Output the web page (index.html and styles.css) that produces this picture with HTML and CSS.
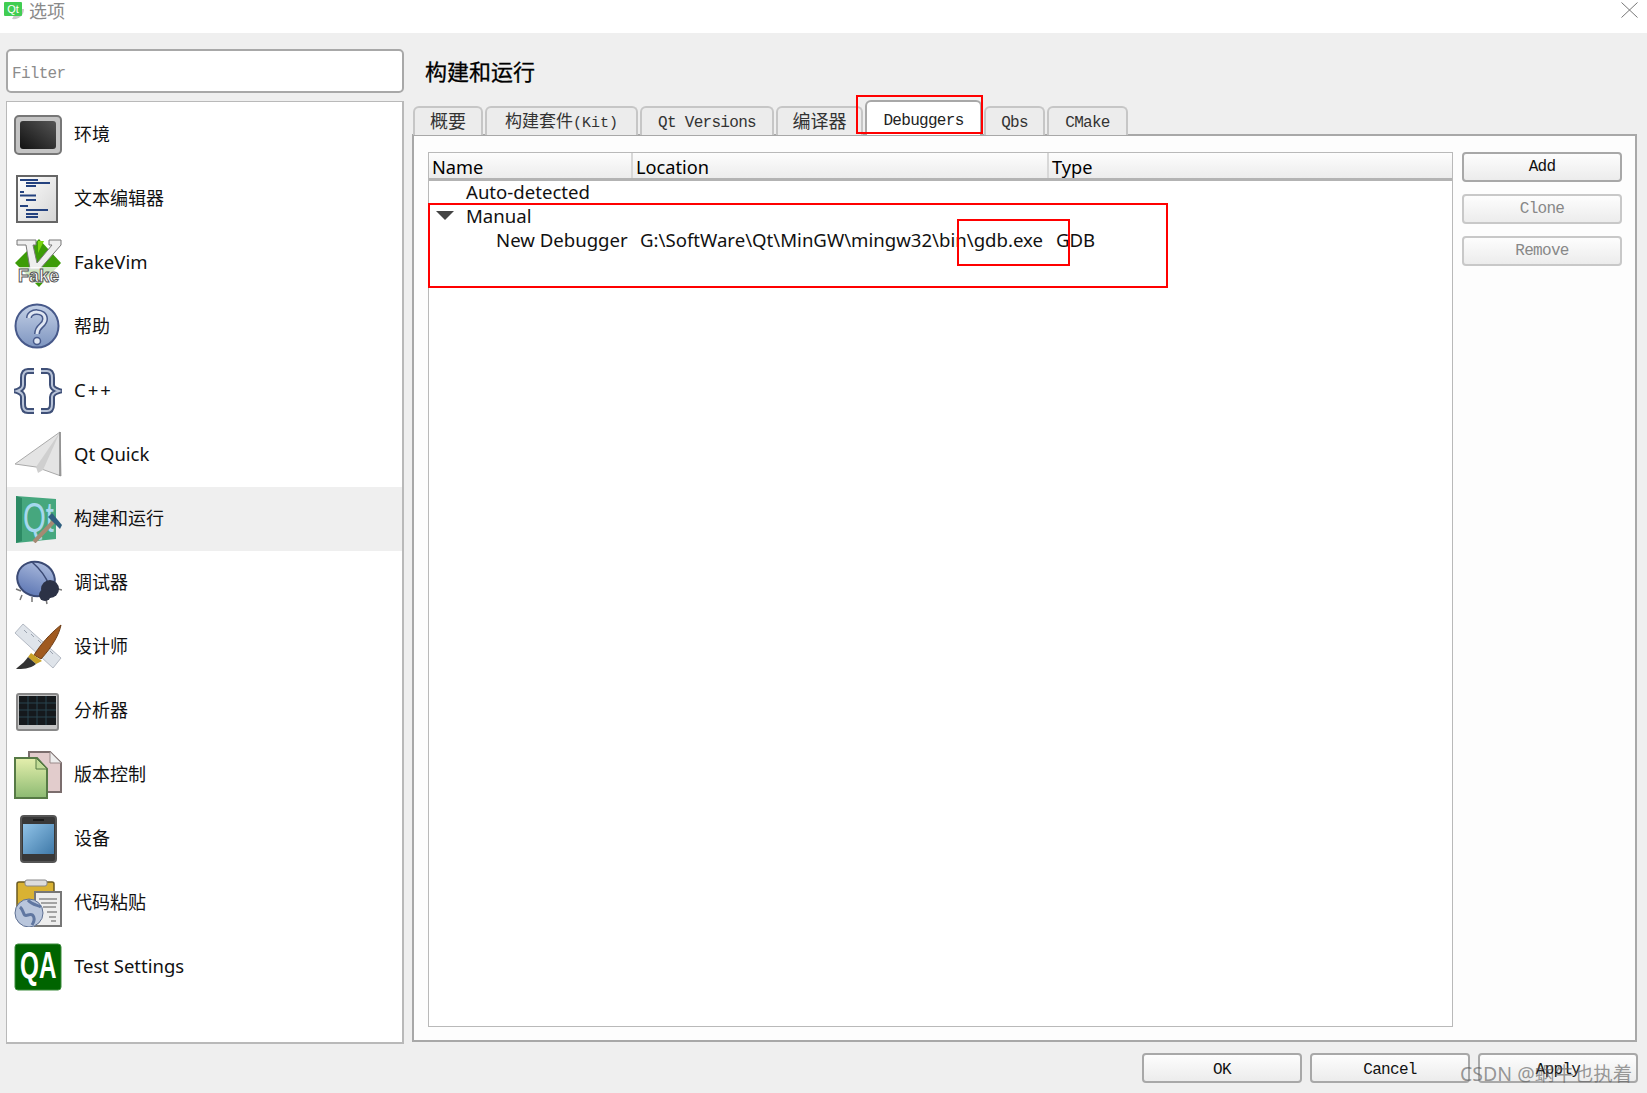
FILE: index.html
```html
<!DOCTYPE html>
<html lang="zh-CN">
<head>
    <meta charset="UTF-8">
    <title>选项</title>
    <link rel="stylesheet" href="styles.css">
</head>
<body>
    <div class="win">
        <!-- title bar -->
        <header class="titlebar">
            <svg class="app-logo" width="24" height="22" viewBox="0 0 24 22">
                <path d="M12 20C16 12 20 10 24 10C24 16 19 21 12 20Z" fill="#c9c9c9"/>
                <rect x="4" y="3" width="18" height="14" rx="1" fill="#41cd52"/>
                <text x="13" y="14" font-family="Liberation Sans" font-size="11" fill="#fff" text-anchor="middle">Qt</text>
            </svg>
            <span class="win-title">选项</span>
            <svg class="win-close" width="17" height="16" viewBox="0 0 17 16">
                <path d="M0.5 0.5L16.500 15.500M16.500 0.5L0.5 15.500" stroke="#777" stroke-width="1" fill="none"/>
            </svg>
        </header>

        <div class="main">
            <!-- left column -->
            <aside class="side">
                <div class="filter">Filter</div>
                <ul class="cat-list">
                    <li class="cat">
                        <svg class="cat-icon" viewBox="0 0 48 48">
                            <defs><linearGradient id="envg" x1="0" y1="1" x2="1" y2="0"><stop offset="0" stop-color="#111"/><stop offset="1" stop-color="#555"/></linearGradient></defs>
                            <rect x="1" y="5" width="46" height="38" rx="4" fill="#c4c4c4" stroke="#777" stroke-width="2"/>
                            <rect x="6" y="10" width="36" height="28" rx="3" fill="url(#envg)"/>
                        </svg>
                        <span>环境</span>
                    </li>
                    <li class="cat">
                        <svg class="cat-icon" viewBox="0 0 48 48">
                            <defs><linearGradient id="txtg" x1="0" y1="0" x2="1" y2="1"><stop offset="0" stop-color="#fff"/><stop offset="1" stop-color="#d4d4d4"/></linearGradient></defs>
                            <rect x="3" y="1" width="40" height="46" fill="url(#txtg)" stroke="#666" stroke-width="2"/>
                            <path d="M6 5h18M12 8h24M12 11h10M6 17h4M6 20.500h16M12 25h10M6 31h8M12 35h22M12 39h12M12 42h12" stroke="#24427f" stroke-width="2" fill="none"/>
                        </svg>
                        <span>文本编辑器</span>
                    </li>
                    <li class="cat">
                        <svg class="cat-icon" viewBox="0 0 48 48">
                            <path d="M25 0L47 24L25 48L1 24Z" fill="#3c9c08"/>
                            <path d="M3 1H22V6H19L23 24L38 6H35V1H47V6L26 30H16L12 6H3Z" fill="#eee" stroke="#777"/>
                            <path d="M24 2L30 2L24 14Z" fill="#7ad50e"/>
                            <rect x="3" y="28" width="43" height="16" fill="#fff" fill-opacity="0.75"/>
                            <text x="4" y="43" class="ic-fake" textLength="41" lengthAdjust="spacingAndGlyphs">Fake</text>
                        </svg>
                        <span class="cat-en">FakeVim</span>
                    </li>
                    <li class="cat">
                        <svg class="cat-icon" viewBox="0 0 48 48">
                            <defs><linearGradient id="helpg" x1="0" y1="0" x2="0" y2="1"><stop offset="0" stop-color="#c3d0e6"/><stop offset="1" stop-color="#7e95c0"/></linearGradient></defs>
                            <circle cx="23" cy="23" r="21.500" fill="url(#helpg)" stroke="#47598a" stroke-width="2"/>
                            <path d="M15 15C15 7 31 7 31 16C31 23 23 22 23 31" fill="none" stroke="#47598a" stroke-width="6"/>
                            <path d="M15 15C15 7 31 7 31 16C31 23 23 22 23 31" fill="none" stroke="#dfe6f2" stroke-width="3"/>
                            <circle cx="23" cy="38" r="3.500" fill="#dfe6f2" stroke="#47598a" stroke-width="1.500"/>
                        </svg>
                        <span>帮助</span>
                    </li>
                    <li class="cat">
                        <svg class="cat-icon" viewBox="0 0 48 48">
                            <path d="M20 4H14C10 4 9 7 9 11V18C9 21 6 23 3 24C6 25 9 27 9 30V37C9 41 10 44 14 44H20M27 4H33C37 4 38 7 38 11V18C38 21 42 23 45 24C42 25 38 27 38 30V37C38 41 37 44 33 44H27" fill="none" stroke="#3f5078" stroke-width="6"/>
                            <path d="M20 4H14C10 4 9 7 9 11V18C9 21 6 23 3 24C6 25 9 27 9 30V37C9 41 10 44 14 44H20M27 4H33C37 4 38 7 38 11V18C38 21 42 23 45 24C42 25 38 27 38 30V37C38 41 37 44 33 44H27" fill="none" stroke="#b9c4d8" stroke-width="2"/>
                        </svg>
                        <span class="cat-cpp">C++</span>
                    </li>
                    <li class="cat">
                        <svg class="cat-icon" viewBox="0 0 48 48">
                            <path d="M46 1L1 33L22 36L47 45Z" fill="#e4e4e4" stroke="#aaa"/>
                            <path d="M46 1L22 36L24 42L29 39Z" fill="#cfcfcf"/>
                            <path d="M46 1V45" stroke="#888" stroke-width="1.500"/>
                        </svg>
                        <span class="cat-en">Qt Quick</span>
                    </li>
                    <li class="cat cat-on">
                        <svg class="cat-icon" viewBox="0 0 48 48">
                            <path d="M2 1L42 4V44L2 48Z" fill="#46a77e"/>
                            <path d="M2 1L8 3V46L2 48Z" fill="#2c8a64"/>
                            <text transform="translate(9 37) scale(1.050 1.500)" class="ic-qt">Qt</text>
                            <path d="M20 47L42 24" stroke="#a58a73" stroke-width="4"/>
                            <path d="M34 22L46 34L48 30L38 18Z" fill="#2f5f7f"/>
                        </svg>
                        <span>构建和运行</span>
                    </li>
                    <li class="cat">
                        <svg class="cat-icon" viewBox="0 0 48 48">
                            <defs><linearGradient id="bugg" x1="0" y1="0" x2="0" y2="1"><stop offset="0" stop-color="#a9b9dc"/><stop offset="1" stop-color="#6079b5"/></linearGradient></defs>
                            <path d="M2 30L7 32M8 36L6 41M18 38L18 43M32 40L33 45M44 30L48 31" stroke="#777" stroke-width="1.500"/>
                            <ellipse cx="22" cy="20" rx="19" ry="17" transform="rotate(20 22 20)" fill="url(#bugg)" stroke="#3b4a74" stroke-width="2"/>
                            <path d="M18 3C26 10 32 18 35 26" fill="none" stroke="#3b4a74" stroke-width="1.500"/>
                            <circle cx="36" cy="30" r="9" fill="#2c3246"/>
                            <circle cx="31" cy="36" r="6" fill="#2c3246"/>
                        </svg>
                        <span>调试器</span>
                    </li>
                    <li class="cat">
                        <svg class="cat-icon" viewBox="0 0 48 48">
                            <path d="M9 1L47 35L39 45L1 10Z" fill="#dfe4ea" stroke="#b4bac4"/>
                            <path d="M10 7L13 10M17 11L20 14M24 17L27 20M36 28L39 31" stroke="#9aa2ae" fill="none"/>
                            <path d="M47 2C42 6 30 16 20 32L27 36C38 24 45 12 47 2Z" fill="#a05a20" stroke="#6f3f18"/>
                            <path d="M17 30L28 38L22 41L14 34Z" fill="#c9a227"/>
                            <path d="M14 34L22 41C16 46 8 46 2 46C6 42 10 40 14 34Z" fill="#333"/>
                        </svg>
                        <span>设计师</span>
                    </li>
                    <li class="cat">
                        <svg class="cat-icon" viewBox="0 0 48 48">
                            <rect x="3" y="7" width="41" height="36" rx="2" fill="#c4c4c4" stroke="#888" stroke-width="2"/>
                            <rect x="5" y="9" width="37" height="29" fill="#15191c"/>
                            <path d="M5 16H42M5 23H42M5 30H42M14 9V38M23 9V38M32 9V38" stroke="#28454f" stroke-width="1"/>
                        </svg>
                        <span>分析器</span>
                    </li>
                    <li class="cat">
                        <svg class="cat-icon" viewBox="0 0 48 48">
                            <defs><linearGradient id="vcg" x1="0" y1="0" x2="0" y2="1"><stop offset="0" stop-color="#e5efad"/><stop offset="1" stop-color="#8cba72"/></linearGradient></defs>
                            <path d="M15 1H36L47 12V41H15Z" fill="#e2cccc" stroke="#7b6d6d" stroke-width="2"/>
                            <path d="M36 1V12H47" fill="#eee" stroke="#9a8a8a"/>
                            <path d="M1 7H23L33 18V47H1Z" fill="url(#vcg)" stroke="#567a45" stroke-width="2"/>
                            <path d="M22 7V18H33Z" fill="#c2dc97" stroke="#567a45"/>
                        </svg>
                        <span>版本控制</span>
                    </li>
                    <li class="cat">
                        <svg class="cat-icon" viewBox="0 0 48 48">
                            <defs><linearGradient id="devg" x1="0" y1="0" x2="1" y2="1"><stop offset="0" stop-color="#90c3e8"/><stop offset="1" stop-color="#3f79a8"/></linearGradient></defs>
                            <rect x="7" y="1" width="35" height="46" rx="3" fill="#383838" stroke="#555" stroke-width="2"/>
                            <rect x="9" y="9" width="31" height="30" fill="url(#devg)"/>
                            <path d="M19 5H30" stroke="#111" stroke-width="1.500"/>
                        </svg>
                        <span>设备</span>
                    </li>
                    <li class="cat">
                        <svg class="cat-icon" viewBox="0 0 48 48">
                            <rect x="3" y="3" width="37" height="36" rx="2" fill="#d9b233" stroke="#6a5a22" stroke-width="1.500"/>
                            <rect x="11" y="1" width="22" height="6" rx="2" fill="#ddd" stroke="#888"/>
                            <rect x="21" y="13" width="26" height="34" fill="#eee" stroke="#777" stroke-width="2"/>
                            <path d="M25 20H43M27 24H43M29 28H42M33 33H43M35 38H42M37 42H42" stroke="#8a8a8a" stroke-width="1.500"/>
                            <circle cx="15" cy="34" r="14" fill="#b9c6dc" stroke="#5d6f92"/>
                            <path d="M6 28C11 32 8 38 14 36C20 34 22 40 18 46M14 21C18 26 24 26 27 28" stroke="#6077a1" stroke-width="3" fill="none"/>
                        </svg>
                        <span>代码粘贴</span>
                    </li>
                    <li class="cat">
                        <svg class="cat-icon" viewBox="0 0 48 48">
                            <rect x="1" y="1" width="46" height="46" rx="3" fill="#006400" stroke="#3d8c3d"/>
                            <text transform="translate(6 35) scale(0.900 1.400)" class="ic-qa">QA</text>
                        </svg>
                        <span class="cat-en">Test Settings</span>
                    </li>
                </ul>
            </aside>

            <!-- right column -->
            <section class="page">
                <h1 class="page-title">构建和运行</h1>
                <div class="tabs">
                    <div class="tab tab-a">概要</div>
                    <div class="tab tab-b">构建套件<span class="tab-kit">(Kit)</span></div>
                    <div class="tab tab-c">Qt Versions</div>
                    <div class="tab tab-d">编译器</div>
                    <div class="tab tab-e tab-on">Debuggers</div>
                    <div class="tab tab-f">Qbs</div>
                    <div class="tab tab-g">CMake</div>
                </div>
                <div class="tab-body">
                    <div class="tree">
                        <div class="tree-head">
                            <div class="th th-name">Name</div>
                            <div class="th th-loc">Location</div>
                            <div class="th th-type">Type</div>
                        </div>
                        <div class="row row-auto">Auto-detected</div>
                        <div class="row row-manual"><i class="arrow"></i>Manual</div>
                        <div class="row row-item">
                            <span class="c-name">New Debugger</span>
                            <span class="c-path">G:\SoftWare\Qt\MinGW\mingw32\bin\gdb.exe</span>
                            <span class="c-type">GDB</span>
                        </div>
                    </div>
                    <div class="tool-btns">
                        <div class="btn">Add</div>
                        <div class="btn btn-off">Clone</div>
                        <div class="btn btn-off">Remove</div>
                    </div>
                </div>
            </section>
        </div>

        <footer class="foot">
            <div class="btn foot-btn">OK</div>
            <div class="btn foot-btn">Cancel</div>
            <div class="btn foot-btn">Apply</div>
        </footer>
    </div>

    <!-- annotations drawn over the screenshot -->
    <div class="mark mark-tab"></div>
    <div class="mark mark-row"></div>
    <div class="mark mark-exe"></div>
    <div class="watermark">CSDN @蜗牛也执着</div>
</body>
</html>
```

FILE: styles.css
```css
:root {
    --bg: #efefef;
    --line: #b9b9b9;
    --line-dark: #a8a8a8;
    --mono: "Liberation Mono", "Noto Sans CJK SC", monospace;
    --ui: "Noto Sans", "Noto Sans CJK SC", sans-serif;
}

html, body {
    margin: 0;
    padding: 0;
    height: 100%;
    overflow: hidden;
}

body {
    background: var(--bg);
    color: #000;
    font-family: var(--ui);
}

.win {
    display: flex;
    flex-direction: column;
    height: 1093px;
}

/* title bar */
.titlebar {
    display: flex;
    align-items: center;
    height: 33px;
    flex-shrink: 0;
    background: #fff;
    padding: 0 9px 13px 0;
    box-sizing: border-box;
}

.win-title {
    margin: 1px 0 0 5px;
    font-size: 18px;
    color: #8a8a8a;
    line-height: 20px;
}

.win-close {
    margin-left: auto;
}

/* main area */
.main {
    display: flex;
    flex: 1;
    min-height: 0;
    padding: 16px 10px 0 6px;
}

.side {
    width: 398px;
    flex-shrink: 0;
    margin-right: 8px;
}

.filter {
    height: 44px;
    box-sizing: border-box;
    border: 2px solid var(--line-dark);
    border-radius: 5px;
    background: #fff;
    padding: 14px 4px 0;
    font: 16px var(--mono);
    letter-spacing: -0.7px;
    color: #8c8c8c;
}

.cat-list {
    list-style: none;
    margin: 8px 0 0;
    padding: 1px 0 0;
    height: 943px;
    box-sizing: border-box;
    background: #fff;
    border: 1px solid var(--line);
    border-width: 1px 2px 2px 1px;
}

.cat {
    display: flex;
    align-items: center;
    height: 64px;
    padding-left: 7px;
    font-size: 18px;
    color: #111;
}

.cat span {
    margin-top: -4px;
}

.cat .cat-en {
    font-size: 18.500px;
}

.cat .cat-cpp {
    font-size: 18.500px;
    letter-spacing: 2px;
}

.cat-on {
    background: var(--bg);
}

.cat-icon {
    width: 48px;
    height: 48px;
    margin-right: 12px;
    flex-shrink: 0;
}

.ic-fake {
    font: bold 19px "Liberation Sans", sans-serif;
    fill: #fff;
    stroke: #555;
    stroke-width: 1px;
}

.ic-qt {
    font: 28px "Liberation Sans", sans-serif;
    fill: #a5d8ee;
}

.ic-qa {
    font: bold 27px "Liberation Sans", sans-serif;
    fill: #fff;
}

/* right page */
.page {
    flex: 1;
    min-width: 0;
    display: flex;
    flex-direction: column;
}

.page-title {
    margin: 7px 0 0 13px;
    height: 44px;
    font-size: 22px;
    font-weight: 400;
    line-height: 30px;
    -webkit-text-stroke: 0.3px #000;
}

.tabs {
    display: flex;
    align-items: flex-end;
    height: 35px;
    padding-left: 1px;
    gap: 2px;
    position: relative;
    z-index: 1;
    margin-bottom: -1px;
}

.tab {
    height: 29px;
    box-sizing: border-box;
    border: 2px solid #c6c6c6;
    border-bottom: 0;
    border-radius: 6px 6px 0 0;
    background: #ececec;
    text-align: center;
    font: 16px/30px var(--mono);
    letter-spacing: -0.7px;
    color: #333;
}

.tab-a { width: 70px; font-size: 18px; letter-spacing: 0; }
.tab-b { width: 153px; font-size: 17px; letter-spacing: 0; }
.tab-c { width: 134px; }
.tab-d { width: 87px; font-size: 18px; letter-spacing: 0; }
.tab-e { width: 117px; }
.tab-f { width: 61px; }
.tab-g { width: 81px; }

.tab-kit {
    font-size: 15px;
}

.tab-on {
    height: 35px;
    background: #fff;
    border-color: var(--line-dark);
    line-height: 38px;
    color: #222;
}

.tab-body {
    display: flex;
    height: 909px;
    box-sizing: border-box;
    background: #fdfdfd;
    border: 2px solid var(--line-dark);
    padding: 16px 13px 0 14px;
    gap: 9px;
}

.tree {
    width: 1025px;
    height: 875px;
    box-sizing: border-box;
    background: #fff;
    border: 1px solid var(--line);
    font-size: 18.600px;
    flex-shrink: 0;
}

.tree-head {
    display: flex;
    height: 28px;
    box-sizing: border-box;
    background: linear-gradient(#fdfdfd, #ececec);
    border-bottom: 3px solid #b3b3b3;
    font-size: 18.200px;
}

.th {
    box-sizing: border-box;
    padding-left: 3px;
    border-right: 2px solid #d8d8d8;
    line-height: 29px;
    white-space: nowrap;
}

.th-name { width: 204px; }
.th-loc { width: 416px; }
.th-type { flex: 1; border-right: 0; }

.row {
    height: 24px;
    box-sizing: border-box;
    line-height: 22px;
    white-space: nowrap;
    color: #111;
}

.row-auto { padding-left: 37px; }

.row-manual {
    display: flex;
    align-items: center;
    padding: 0 0 2px 7px;
}

.arrow {
    width: 0;
    height: 0;
    margin-right: 12px;
    border-left: 9px solid transparent;
    border-right: 9px solid transparent;
    border-top: 9px solid #444;
}

.row-item {
    display: flex;
}

.c-name { margin-left: 67px; width: 144px; }
.c-path { width: 416px; }

/* buttons */
.tool-btns {
    display: flex;
    flex-direction: column;
    gap: 12px;
    width: 161px;
}

.btn {
    height: 30px;
    box-sizing: border-box;
    border: 2px solid var(--line-dark);
    border-radius: 4px;
    background: linear-gradient(#fdfdfd, #ececec);
    text-align: center;
    font: 16px/27px var(--mono);
    letter-spacing: -0.7px;
    color: #111;
}

.btn-off {
    border-color: #c8c8c8;
    color: #888;
}

.foot {
    display: flex;
    justify-content: flex-end;
    gap: 8px;
    flex-shrink: 0;
    height: 51px;
    padding: 11px 9px 0 0;
    box-sizing: border-box;
}

.foot .foot-btn {
    width: 160px;
    line-height: 30px;
}

/* red annotations */
.mark {
    position: absolute;
    z-index: 2;
    box-sizing: border-box;
    border: 2px solid #f00;
    pointer-events: none;
}

.mark-tab { left: 856px; top: 95px; width: 127px; height: 39px; }
.mark-row { left: 428px; top: 203px; width: 740px; height: 85px; }
.mark-exe { left: 957px; top: 219px; width: 113px; height: 47px; }

.watermark {
    position: absolute;
    z-index: 2;
    left: 1460px;
    top: 1061px;
    font: 19.500px/26px var(--ui);
    color: rgba(90, 90, 90, 0.62);
    white-space: nowrap;
}
```
